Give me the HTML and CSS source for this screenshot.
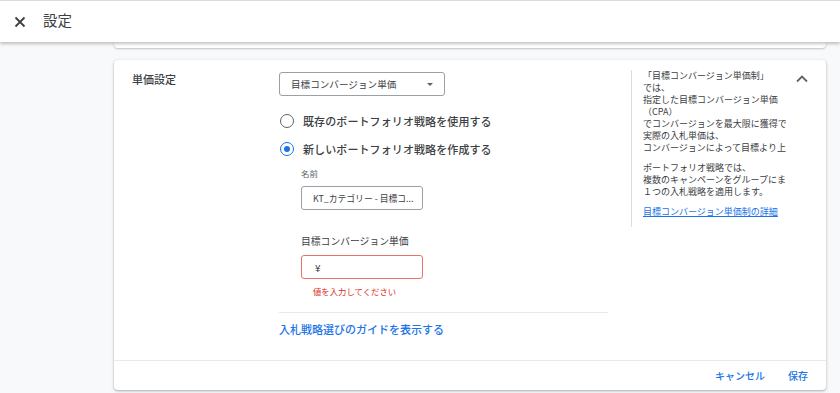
FILE: index.html
```html
<!DOCTYPE html>
<html lang="ja">

<head>
    <meta charset="UTF-8">
    <meta name="viewport" content="width=device-width, initial-scale=1.0">
    <title>設定</title>
    <link rel="stylesheet" href="styles.css">
</head>

<body>

    <header class="top-bar">
        <button class="close-btn" aria-label="閉じる">
            <svg width="12" height="12" viewBox="0 0 12 12">
                <path d="M1.5 1.5L10.5 10.5M10.5 1.5L1.5 10.5" stroke="#3c4043" stroke-width="1.8" fill="none"/>
            </svg>
        </button>
        <h1 class="top-title">設定</h1>
    </header>

    <main class="page">
        <div class="card-stub"></div>

        <section class="card">
            <div class="card-body">
                <div class="row-label">単価設定</div>

                <div class="row-content">
                    <div class="select-box">
                        <span>目標コンバージョン単価</span>
                        <span class="select-arrow"></span>
                    </div>

                    <label class="radio-row">
                        <span class="radio"></span>
                        既存のポートフォリオ戦略を使用する
                    </label>
                    <label class="radio-row">
                        <span class="radio checked"></span>
                        新しいポートフォリオ戦略を作成する
                    </label>

                    <div class="sub-form">
                        <div class="field-label small">名前</div>
                        <div class="text-input">KT_カテゴリー - 目標コ...</div>

                        <div class="field-label">目標コンバージョン単価</div>
                        <div class="text-input error">¥</div>
                        <div class="error-text">値を入力してください</div>
                    </div>

                    <div class="divider"></div>
                    <a class="guide-link" href="#">入札戦略選びのガイドを表示する</a>
                </div>

                <aside class="info-panel">
                    <p>「目標コンバージョン単価制」<br>では、<br>指定した目標コンバージョン単価<br>（CPA）<br>でコンバージョンを最大限に獲得で<br>実際の入札単価は、<br>コンバージョンによって目標より上</p>
                    <p>ポートフォリオ戦略では、<br>複数のキャンペーンをグループにま<br>１つの入札戦略を適用します。</p>
                    <a class="info-link" href="#">目標コンバージョン単価制の詳細</a>
                </aside>

                <button class="collapse-btn" aria-label="閉じる">
                    <svg width="14" height="10" viewBox="0 0 14 10">
                        <path d="M2 7.5L7 2.5L12 7.5" stroke="#5f6368" stroke-width="1.8" fill="none"/>
                    </svg>
                </button>
            </div>

            <div class="card-footer">
                <button class="text-btn">キャンセル</button>
                <button class="text-btn">保存</button>
            </div>
        </section>
    </main>

</body>

</html>
```

FILE: styles.css
```css
* {
    box-sizing: border-box;
}

body {
    margin: 0;
    font-family: "Noto Sans CJK JP", "Noto Sans", sans-serif;
    background-color: #f8f9fa;
    color: #3c4043;
    height: 393px;
    overflow: hidden;
}

button {
    font-family: inherit;
    background: none;
    border: none;
    padding: 0;
    cursor: pointer;
}

.top-bar {
    position: relative;
    z-index: 2;
    height: 42px;
    display: flex;
    align-items: center;
    background-color: #fff;
    border-top: 1px solid #dadce0;
    box-shadow: 0 2px 3px rgba(60, 64, 67, 0.3);
}

.close-btn {
    width: 12px;
    height: 12px;
    margin-left: 14px;
    display: flex;
}

.top-title {
    margin: 0 0 0 17px;
    font-size: 14.5px;
    font-weight: 400;
    color: #3c4043;
    line-height: 1;
    padding-bottom: 3px;
}

.page {
    padding: 0 14px 0 114px;
}

.card-stub {
    height: 6px;
    background-color: #fff;
    border-radius: 0 0 4px 4px;
    box-shadow: 0 1px 2px rgba(60, 64, 67, 0.3);
}

.card {
    margin-top: 12px;
    background-color: #fff;
    border-radius: 4px;
    box-shadow: 0 1px 2px rgba(60, 64, 67, 0.3), 0 1px 3px 1px rgba(60, 64, 67, 0.1);
}

.card-body {
    display: flex;
    align-items: flex-start;
    height: 301px;
    padding: 12px 0 0 18px;
    border-bottom: 1px solid #e8eaed;
}

.row-label {
    width: 147px;
    font-size: 11px;
    font-weight: 500;
    line-height: 14px;
    color: #3c4043;
}

.row-content {
    width: 329px;
}

.select-box {
    width: 166px;
    height: 24px;
    border: 1px solid #9aa0a6;
    border-radius: 3px;
    display: flex;
    align-items: center;
    justify-content: space-between;
    padding: 0 11px;
    font-size: 9.6px;
    color: #3c4043;
}

.select-arrow {
    width: 0;
    height: 0;
    border-left: 3.5px solid transparent;
    border-right: 3.5px solid transparent;
    border-top: 3.5px solid #5f6368;
}

.radio-row {
    height: 28px;
    display: flex;
    align-items: center;
    font-size: 11px;
    font-weight: 500;
    letter-spacing: 0.1px;
    color: #3c4043;
}

.radio-row:first-of-type {
    margin-top: 11px;
}

.radio {
    width: 14px;
    height: 14px;
    border: 1.6px solid #5f6368;
    border-radius: 50%;
    margin: 0 9px 0 1px;
    display: flex;
    align-items: center;
    justify-content: center;
}

.radio.checked {
    border-color: #1a73e8;
}

.radio.checked::after {
    content: "";
    width: 6px;
    height: 6px;
    border-radius: 50%;
    background-color: #1a73e8;
}

.sub-form {
    padding: 3px 0 0 22px;
}

.field-label {
    font-size: 9.8px;
    line-height: 14px;
    color: #3c4043;
    margin-top: 24px;
    margin-bottom: 7px;
}

.field-label.small {
    font-size: 8.5px;
    margin-top: 0;
    margin-bottom: 6px;
    color: #5f6368;
}

.text-input {
    width: 122px;
    height: 24px;
    border: 1px solid #9aa0a6;
    border-radius: 3px;
    display: flex;
    align-items: center;
    padding-left: 11px;
    font-size: 8.8px;
    color: #3c4043;
}

.text-input.error {
    border: 1.5px solid #e57368;
    padding-left: 13px;
    font-size: 10px;
}

.error-text {
    margin-top: 6px;
    padding-left: 12px;
    font-size: 8.4px;
    line-height: 12px;
    color: #d93025;
}

.divider {
    margin-top: 15px;
    height: 1px;
    background-color: #e8eaed;
}

.guide-link {
    display: block;
    margin-top: 8px;
    font-size: 11px;
    font-weight: 500;
    line-height: 16px;
    color: #1a73e8;
    text-decoration: none;
}

.info-panel {
    width: 155px;
    margin: -2px 0 0 23px;
    padding: 0 0 9px 11px;
    border-left: 1px solid #dadce0;
    overflow: hidden;
    white-space: nowrap;
    font-size: 9px;
    line-height: 12px;
    color: #3c4043;
}

.info-panel p {
    margin: 0 0 8px;
}

.info-link {
    display: block;
    color: #1a73e8;
    text-decoration: underline;
}

.collapse-btn {
    margin: 2px 0 0 9px;
    width: 14px;
    height: 10px;
    display: flex;
}

.card-footer {
    height: 29px;
    display: flex;
    justify-content: flex-end;
    align-items: center;
    gap: 23px;
    padding-right: 18px;
}

.text-btn {
    font-size: 10px;
    font-weight: 500;
    color: #1a73e8;
}
```
